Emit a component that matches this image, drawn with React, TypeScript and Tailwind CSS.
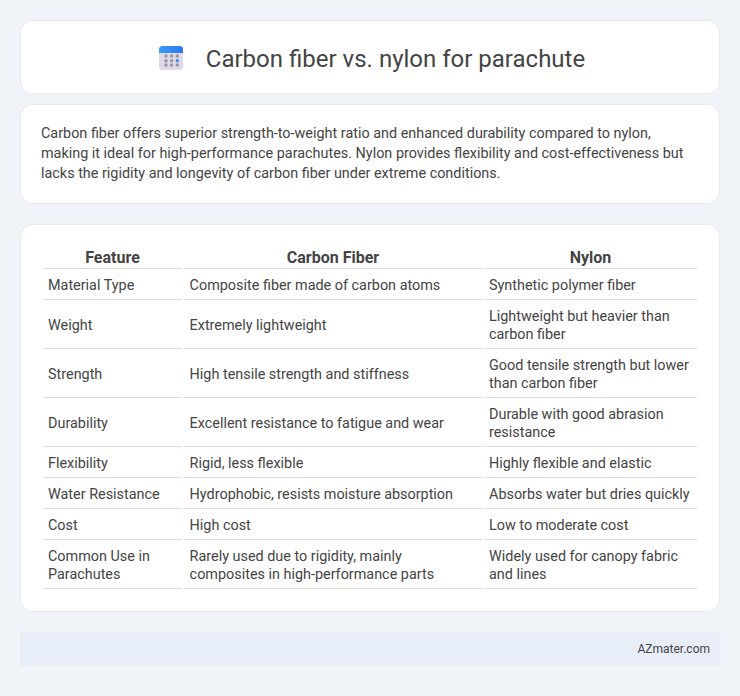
const rows = [
  ["Material Type", "Composite fiber made of carbon atoms", "Synthetic polymer fiber"],
  ["Weight", "Extremely lightweight", "Lightweight but heavier than carbon fiber"],
  ["Strength", "High tensile strength and stiffness", "Good tensile strength but lower than carbon fiber"],
  ["Durability", "Excellent resistance to fatigue and wear", "Durable with good abrasion resistance"],
  ["Flexibility", "Rigid, less flexible", "Highly flexible and elastic"],
  ["Water Resistance", "Hydrophobic, resists moisture absorption", "Absorbs water but dries quickly"],
  ["Cost", "High cost", "Low to moderate cost"],
  ["Common Use in Parachutes", "Rarely used due to rigidity, mainly composites in high-performance parts", "Widely used for canopy fabric and lines"],
];

function CalendarIcon() {
  return (
    <svg width="32" height="32" viewBox="0 0 32 32" className="mb-[2px] shrink-0">
      <defs>
        <linearGradient id="calTop" x1="0" y1="0" x2="1" y2="0">
          <stop offset="0" stopColor="#3a9cf6" />
          <stop offset="1" stopColor="#2a78ee" />
        </linearGradient>
      </defs>
      <rect x="4" y="6" width="24" height="24" rx="3.5" fill="#e0d9ec" />
      <path d="M4 13V9.5A3.5 3.5 0 0 1 7.5 6h17A3.5 3.5 0 0 1 28 9.5V13Z" fill="url(#calTop)" />
      {[9.5, 15.1, 20.8].map((x) =>
        [14.5, 19.2, 23.6].map((y) => (
          <rect key={x + "-" + y} x={x} y={y} width="3" height="3" rx="0.4" fill={x === 20.8 && y === 19.2 ? "#2f8df5" : "#98949f"} />
        ))
      )}
    </svg>
  );
}

export default function App() {
  return (
    <div className="min-h-[696px] bg-[#f0f4f9] p-5 font-['Roboto',sans-serif] text-[#444444]">
      <div className="flex h-[74px] items-center justify-center gap-[19px] rounded-xl border border-[#e6eaf2] bg-white">
        <CalendarIcon />
        <h1 className="mt-1 text-2xl font-normal">Carbon fiber vs. nylon for parachute</h1>
      </div>

      <div className="mt-2.5 rounded-xl border border-[#e6eaf2] bg-white px-5 py-[19px] text-[14.4px] leading-5">
        Carbon fiber offers superior strength-to-weight ratio and enhanced durability compared to nylon, making it ideal for high-performance parachutes. Nylon provides flexibility and cost-effectiveness but lacks the rigidity and longevity of carbon fiber under extreme conditions.
      </div>

      <div className="mt-5 rounded-xl border border-[#e6eaf2] bg-white px-5 pt-5 pb-5">
        <table className="w-full table-fixed border-separate border-spacing-[2px] text-[14.4px] leading-[18px]">
          <colgroup>
            <col className="w-[139px]" />
            <col className="w-[298px]" />
            <col />
          </colgroup>
          <thead>
            <tr>
              <th className="border-b border-[#dddddd] text-center text-[16px] leading-[21px] font-bold">Feature</th>
              <th className="border-b border-[#dddddd] text-center text-[16px] leading-[21px] font-bold">Carbon Fiber</th>
              <th className="border-b border-[#dddddd] text-center text-[16px] leading-[21px] font-bold">Nylon</th>
            </tr>
          </thead>
          <tbody>
            {rows.map((row) => (
              <tr key={row[0]}>
                {row.map((cell, i) => (
                  <td key={cell} className={i === 1 ? "border-b border-[#dddddd] pt-1.5 pr-[5px] pb-1 pl-[5.6px] align-middle" : "border-b border-[#dddddd] pt-1.5 pr-[5px] pb-1 pl-[5px] align-middle"}>{cell}</td>
                ))}
              </tr>
            ))}
          </tbody>
        </table>
      </div>

      <div className="mt-5 flex h-[34px] items-center justify-end bg-[#e8eef8] px-2.5 text-xs">
        AZmater.com
      </div>
    </div>
  );
}
